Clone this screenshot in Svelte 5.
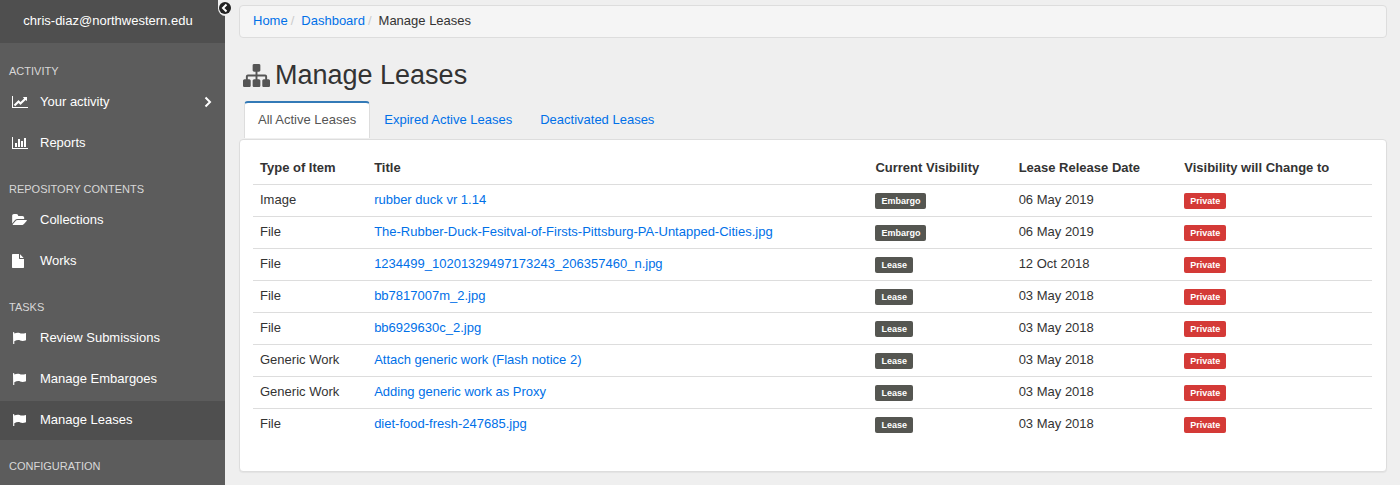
<script>
  const icons = {
    line: { box: '0 0 2048 1792', w: 16, d: 'M2048 1536v128h-2048v-1536h128v1408h1920zM1920 288v435q0 21-19.5 29.5t-35.5-7.5l-121-121-633 633q-10 10-23 10t-23-10l-233-233-416 416-192-192 585-585q10-10 23-10t23 10l233 233 464-464-121-121q-16-16-7.5-35.5t29.5-19.5h435q14 0 23 9t9 23z' },
    bars: { box: '0 0 2048 1792', w: 16, d: 'M640 896v512h-256v-512h256zm384-512v1024h-256v-1024h256zm1024 1152v128h-2048v-1536h128v1408h1920zm-640-896v768h-256v-768h256zm384-384v1152h-256v-1152h256z' },
    folder: { box: '0 0 1879 1792', w: 15, d: 'M1879 952q0 31-31 66l-336 396q-43 51-120.5 86.5t-143.5 35.5h-1088q-34 0-60.5-13t-26.5-43q0-31 31-66l336-396q43-51 120.5-86.5t143.5-35.5h1088q34 0 60.5 13t26.5 43zm-343-344v160h-832q-94 0-197 47.5t-164 119.5l-337 396-5 6q0-4-.5-12.5t-.5-12.5v-960q0-92 66-158t158-66h320q92 0 158 66t66 158v32h544q92 0 158 66t66 158z' },
    file: { box: '128 0 1536 1792', w: 12, d: 'M1152 512v-472q22 14 36 28l408 408q14 14 28 36h-472zm-128 32q0 40 28 68t68 28h544v1056q0 40-28 68t-68 28h-1344q-40 0-68-28t-28-68v-1600q0-40 28-68t68-28h800v544z' },
    flag: { box: '0 0 14 14', w: 14, d: 'M1 1.600Q1 1 1.600 1T2.300 1.600V2.600C4 1.700 6 1.300 7.600 2.100C9.400 3 11.500 2.500 14 1.900V9.200C12 10 10 10.300 8.200 9.500C6.500 8.700 4.500 9.200 2.300 10.200V13H1.200Z' }
  };

  const sections = [
    { label: 'Activity', items: [
      { icon: 'line', text: 'Your activity', more: true },
      { icon: 'bars', text: 'Reports' }
    ] },
    { label: 'Repository Contents', items: [
      { icon: 'folder', text: 'Collections' },
      { icon: 'file', text: 'Works' }
    ] },
    { label: 'Tasks', items: [
      { icon: 'flag', text: 'Review Submissions' },
      { icon: 'flag', text: 'Manage Embargoes' },
      { icon: 'flag', text: 'Manage Leases', active: true }
    ] },
    { label: 'Configuration', items: [] }
  ];

  const tabs = ['All Active Leases', 'Expired Active Leases', 'Deactivated Leases'];
  let current = $state(0);

  const rows = [
    ['Image', 'rubber duck vr 1.14', 'Embargo', '06 May 2019'],
    ['File', 'The-Rubber-Duck-Fesitval-of-Firsts-Pittsburg-PA-Untapped-Cities.jpg', 'Embargo', '06 May 2019'],
    ['File', '1234499_10201329497173243_206357460_n.jpg', 'Lease', '12 Oct 2018'],
    ['File', 'bb7817007m_2.jpg', 'Lease', '03 May 2018'],
    ['File', 'bb6929630c_2.jpg', 'Lease', '03 May 2018'],
    ['Generic Work', 'Attach generic work (Flash notice 2)', 'Lease', '03 May 2018'],
    ['Generic Work', 'Adding generic work as Proxy', 'Lease', '03 May 2018'],
    ['File', 'diet-food-fresh-247685.jpg', 'Lease', '03 May 2018']
  ];
</script>

<div class="page">
  <aside class="sidebar">
    <div class="user">chris-diaz@northwestern.edu</div>
    <button class="toggle" aria-label="Collapse sidebar">
      <svg viewBox="0 0 12 12" width="12" height="12">
        <circle cx="6" cy="6" r="6" fill="#222" />
        <path d="M7.500 2.500 4 6l3.500 3.500" fill="none" stroke="#fff" stroke-width="2" />
      </svg>
    </button>
    <nav>
      {#each sections as section}
        <h2>{section.label}</h2>
        <ul>
          {#each section.items as item}
            <li>
              <a href="#top" class:active={item.active}>
                <span class="icon">
                  <svg viewBox={icons[item.icon].box} width={icons[item.icon].w} height="14"><path d={icons[item.icon].d} /></svg>
                </span>
                <span class="text">{item.text}</span>
                {#if item.more}
                  <svg class="more" viewBox="0 0 8 12" width="8" height="12"><path d="M1.5 1.5 6 6l-4.500 4.500" /></svg>
                {/if}
              </a>
            </li>
          {/each}
        </ul>
      {/each}
    </nav>
  </aside>

  <main>
    <ol class="breadcrumb">
      <li><a href="#top">Home</a></li>
      <li><a href="#top">Dashboard</a></li>
      <li>Manage Leases</li>
    </ol>

    <h1>
      <svg viewBox="0 0 1792 1792" width="27" height="27"><path d="M1792 1248v320q0 40-28 68t-68 28h-320q-40 0-68-28t-28-68v-320q0-40 28-68t68-28h96v-192h-512v192h96q40 0 68 28t28 68v320q0 40-28 68t-68 28h-320q-40 0-68-28t-28-68v-320q0-40 28-68t68-28h96v-192h-512v192h96q40 0 68 28t28 68v320q0 40-28 68t-68 28h-320q-40 0-68-28t-28-68v-320q0-40 28-68t68-28h96v-192q0-52 38-90t90-38h512v-192h-96q-40 0-68-28t-28-68v-320q0-40 28-68t68-28h320q40 0 68 28t28 68v320q0 40-28 68t-68 28h-96v192h512q52 0 90 38t38 90v192h96q40 0 68 28t28 68z" /></svg>
      <span>Manage Leases</span>
    </h1>

    <div class="tabs" role="tablist">
      {#each tabs as tab, i}
        <button role="tab" aria-selected={i === current} class:selected={i === current} onclick={() => (current = i)}>{tab}</button>
      {/each}
    </div>

    <section class="panel">
      <table>
        <colgroup>
          <col class="c-type" /><col class="c-title" /><col class="c-current" /><col class="c-date" /><col />
        </colgroup>
        <thead>
          <tr>
            <th>Type of Item</th>
            <th>Title</th>
            <th>Current Visibility</th>
            <th>Lease Release Date</th>
            <th>Visibility will Change to</th>
          </tr>
        </thead>
        <tbody>
          {#each rows as [type, title, visibility, date]}
            <tr>
              <td>{type}</td>
              <td><a href="#top">{title}</a></td>
              <td><span class="badge">{visibility}</span></td>
              <td>{date}</td>
              <td><span class="badge private">Private</span></td>
            </tr>
          {/each}
        </tbody>
      </table>
    </section>
  </main>
</div>

<style>
  :global(body) {
    margin: 0;
    background: #efefef;
    font: 13px/18px "Liberation Sans", Arial, sans-serif;
    color: #333;
  }

  .page {
    display: grid;
    grid-template-columns: 225px minmax(0, 1fr);
    min-height: 100vh;
  }

  a {
    color: #0070e8;
    text-decoration: none;
  }

  ul, ol {
    margin: 0;
    padding: 0;
    list-style: none;
  }

  .sidebar {
    position: relative;
    background: #5c5c5c;
    color: #fff;
  }

  .user {
    padding: 12px 18px 13px 9px;
    background: #4f4f4f;
    text-align: center;
  }

  .toggle {
    position: absolute;
    top: 0;
    right: -8px;
    display: flex;
    padding: 2px 2px 2px 1px;
    border: 0;
    border-radius: 0 0 8px 8px;
    background: #efefef;
  }

  nav {
    padding-top: 2px;
  }

  h2 {
    margin: 0;
    padding: 17px 9px 3px;
    font-size: 11px;
    font-weight: 400;
    line-height: 18px;
    text-transform: uppercase;
    color: #d8d8d8;
  }

  ul {
    display: grid;
    gap: 2px;
  }

  nav a {
    display: flex;
    align-items: center;
    padding: 10px 13px 11px 12px;
    color: #fff;
  }

  .active {
    background: #4f4f4f;
  }

  .icon {
    display: flex;
    width: 28px;
    fill: #fff;
  }

  .text {
    flex: 1;
  }

  .more {
    fill: none;
    stroke: #fff;
    stroke-width: 2;
  }

  main {
    padding: 5px 13px 13px 14px;
  }

  .breadcrumb {
    display: flex;
    padding: 6px 13px 7px;
    border: 1px solid #ddd;
    border-radius: 4px;
    background: #f5f5f5;
  }

  .breadcrumb li + li::before {
    content: "/";
    padding: 0 7px 0 3px;
    color: #ccc;
  }

  h1 {
    display: flex;
    align-items: center;
    gap: 5px;
    margin: 22px 4px 11px;
    font-size: 27px;
    font-weight: 400;
    line-height: 30px;
  }

  h1 svg {
    fill: #555;
  }

  .tabs {
    display: flex;
    margin: 0 5px 1px;
  }

  .tabs button {
    padding: 8px 13px 9px;
    border: 1px solid transparent;
    border-top-width: 2px;
    border-bottom: 0;
    border-radius: 4px 4px 0 0;
    background: none;
    font: inherit;
    color: #0070e8;
  }

  .tabs .selected {
    border-color: #337ab7 #ddd;
    background: #fff;
    color: #555;
  }

  .panel {
    padding: 13px 14px 13px 13px;
    border: 1px solid #ddd;
    border-radius: 4px;
    background: #fff;
    box-shadow: 0 1px 1px rgba(0, 0, 0, 0.05);
  }

  table {
    width: 100%;
    margin-bottom: 18px;
    border-collapse: collapse;
    table-layout: fixed;
  }

  .c-type { width: 10.200%; }
  .c-title { width: 44.800%; }
  .c-current { width: 12.800%; }
  .c-date { width: 14.800%; }

  th {
    padding: 6px 7px 7px;
    text-align: left;
    font-weight: 700;
  }

  td {
    padding: 6px 7px 7px;
    border-top: 1px solid #ddd;
  }

  .badge {
    display: inline-block;
    padding: 3px 6px;
    border-radius: 2px;
    background: #555651;
    color: #fff;
    font-size: 9px;
    font-weight: 700;
    line-height: 10px;
    vertical-align: bottom;
  }

  .private {
    background: #d43a37;
  }
</style>
